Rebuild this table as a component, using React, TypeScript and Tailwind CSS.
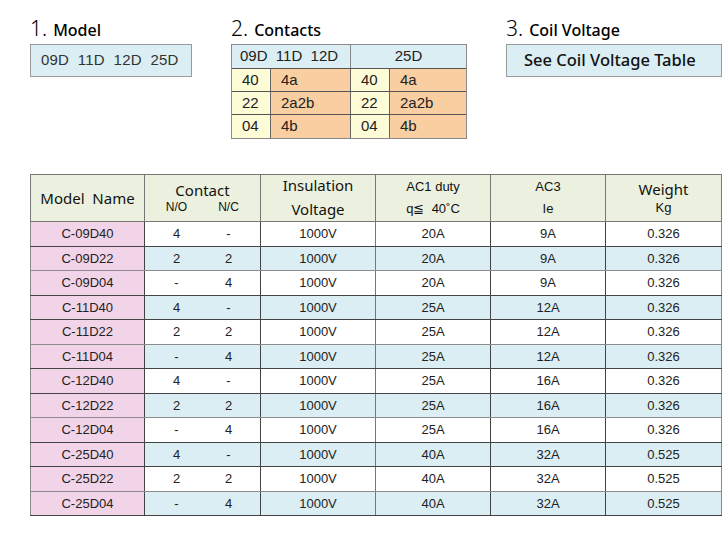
import React from "react";

const rows = [
  ["C-09D40", "4", "-", "20A", "9A", "0.326"],
  ["C-09D22", "2", "2", "20A", "9A", "0.326"],
  ["C-09D04", "-", "4", "20A", "9A", "0.326"],
  ["C-11D40", "4", "-", "25A", "12A", "0.326"],
  ["C-11D22", "2", "2", "25A", "12A", "0.326"],
  ["C-11D04", "-", "4", "25A", "12A", "0.326"],
  ["C-12D40", "4", "-", "25A", "16A", "0.326"],
  ["C-12D22", "2", "2", "25A", "16A", "0.326"],
  ["C-12D04", "-", "4", "25A", "16A", "0.326"],
  ["C-25D40", "4", "-", "40A", "32A", "0.525"],
  ["C-25D22", "2", "2", "40A", "32A", "0.525"],
  ["C-25D04", "-", "4", "40A", "32A", "0.525"],
];

const contacts = [
  ["40", "4a"],
  ["22", "2a2b"],
  ["04", "4b"],
];

function Label({ n, text }: { n: string; text: string }) {
  return (
    <div className="flex items-baseline h-[22px] mb-[4px] text-black">
      <span className="font-['Noto_Sans',sans-serif] text-[21px] font-light leading-none">{n}.</span>
      <span className="ml-[6px] font-['Noto_Sans',sans-serif] text-[16px] font-medium leading-none">{text}</span>
    </div>
  );
}

export default function App() {
  const arial = "font-['Liberation_Sans',Arial,sans-serif]";
  const noto = "font-['Noto_Sans',sans-serif]";
  return (
    <div className="w-[726px] h-[544px] bg-white text-[#222]">
      <div className="flex pl-[30px] pt-[18px]">
        <div className="w-[201px]">
          <Label n="1" text="Model" />
          <div className={`w-[162px] h-[33px] bg-[#daeef3] border border-[#9a9a9a] flex items-center pl-[10px] text-[15px] text-[#333] ${arial}`}>
            <span className="tracking-[0.2px]">09D&nbsp;&nbsp;11D&nbsp;&nbsp;12D&nbsp;&nbsp;25D</span>
          </div>
        </div>

        <div className="w-[275px]">
          <Label n="2" text="Contacts" />
          <div className={`w-[236px] border border-[#8a8a8a] text-[15px] text-[#222] ${arial}`}>
            <div className="flex h-[24px] bg-[#daeef3] border-b border-[#555]">
              <div className="w-[119px] flex items-center pl-[8px] border-r border-[#888]">09D&nbsp;&nbsp;11D&nbsp;&nbsp;12D</div>
              <div className="flex-1 flex items-center justify-center">25D</div>
            </div>
            {contacts.map((c, i) => (
              <div key={c[0]} className={`flex h-[23px] ${i < 2 ? "border-b border-[#555]" : ""}`}>
                <div className="w-[39px] bg-[#fefbd7] flex items-center pl-[10px] border-r border-[#666]">{c[0]}</div>
                <div className="w-[80px] bg-[#f9cfa2] flex items-center pl-[10px] border-r border-[#666]">{c[1]}</div>
                <div className="w-[39px] bg-[#fefbd7] flex items-center pl-[10px] border-r border-[#666]">{c[0]}</div>
                <div className="flex-1 bg-[#f9cfa2] flex items-center pl-[10px]">{c[1]}</div>
              </div>
            ))}
          </div>
        </div>

        <div>
          <Label n="3" text="Coil Voltage" />
          <div className={`w-[216px] h-[33px] bg-[#daeef3] border border-[#9a9a9a] flex items-center pl-[17px] text-[16.5px] font-medium text-[#111] ${noto}`}>
            See Coil Voltage Table
          </div>
        </div>
      </div>

      <table className={`ml-[30px] mt-[35px] border-collapse table-fixed w-[691px] text-[13px] ${arial}`}>
        <colgroup>
          <col className="w-[114px]" />
          <col className="w-[116px]" />
          <col className="w-[115px]" />
          <col className="w-[115px]" />
          <col className="w-[115px]" />
          <col className="w-[116px]" />
        </colgroup>
        <thead>
          <tr className="h-[47px] bg-[#ebf1de] text-[#111]">
            <th className={`border border-[#777] font-normal text-[15px] ${noto}`}>Model&nbsp;&nbsp;Name</th>
            <th className="border border-[#777] font-normal p-0">
              <div className={`text-[15px] leading-[18px] ${noto}`}>Contact</div>
              <div className="flex justify-center gap-[20px] text-[12px] leading-[16px]">
                <span className="w-8 text-center">N/O</span>
                <span className="w-8 text-center">N/C</span>
              </div>
            </th>
            <th className={`border border-[#777] font-normal text-[15px] leading-[24px] ${noto}`}>
              <div className="-mt-[3px]">Insulation</div>
              <div>Voltage</div>
            </th>
            <th className="border border-[#777] font-normal text-[13px] leading-[22px]">
              <div>AC1 duty</div>
              <div>q≦&nbsp;&nbsp;40˚C</div>
            </th>
            <th className="border border-[#777] font-normal text-[13px] leading-[22px]">
              <div>AC3</div>
              <div>Ie</div>
            </th>
            <th className="border border-[#777] font-normal">
              <div className={`text-[15px] leading-[20px] ${noto}`}>Weight</div>
              <div className="text-[13px] leading-[18px]">Kg</div>
            </th>
          </tr>
        </thead>
        <tbody>
          {rows.map((r, i) => {
            const bg = i % 2 === 1 ? "bg-[#daeef3]" : "bg-white";
            const line = i % 3 === 1 ? "border-[#8c8c8c]" : "border-[#444]";
            return (
              <tr key={r[0]} className="h-[24.5px]">
                <td className={`bg-[#f1d4e7] border-x border-b border-x-[#444] border-l-[#888] ${line} text-center`}>{r[0]}</td>
                <td className={`${bg} border-b border-r border-r-[#444] ${line} p-0`}>
                  <div className="flex justify-center gap-[20px]">
                    <span className="w-8 text-center">{r[1]}</span>
                    <span className="w-8 text-center">{r[2]}</span>
                  </div>
                </td>
                <td className={`${bg} border-b border-r border-r-[#777] ${line} text-center`}>1000V</td>
                <td className={`${bg} border-b border-r border-r-[#444] ${line} text-center`}>{r[3]}</td>
                <td className={`${bg} border-b border-r border-r-[#444] ${line} text-center`}>{r[4]}</td>
                <td className={`${bg} border-b border-r border-r-[#888] ${line} text-center`}>{r[5]}</td>
              </tr>
            );
          })}
        </tbody>
      </table>
    </div>
  );
}
